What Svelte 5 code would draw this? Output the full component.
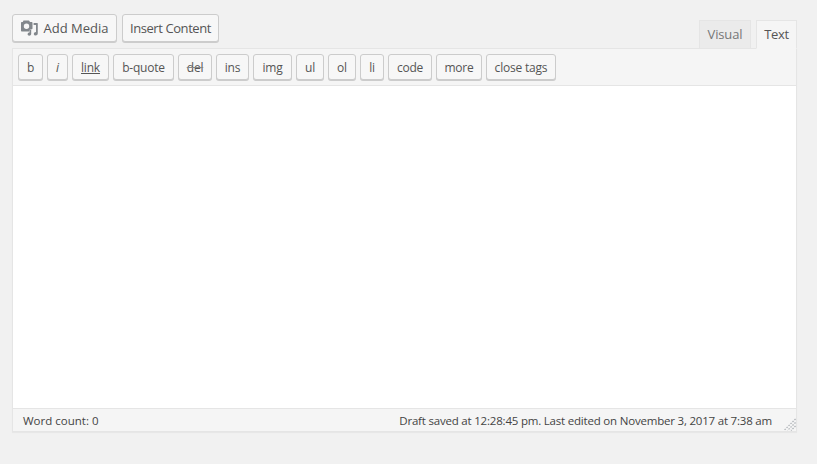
<script>
  const tags = [
    { label: 'b', w: 25 },
    { label: 'i', w: 21, cls: 'it' },
    { label: 'link', w: 37, cls: 'un' },
    { label: 'b-quote', w: 61 },
    { label: 'del', w: 34, cls: 'st' },
    { label: 'ins', w: 33 },
    { label: 'img', w: 39 },
    { label: 'ul', w: 28 },
    { label: 'ol', w: 28 },
    { label: 'li', w: 24 },
    { label: 'code', w: 44 },
    { label: 'more', w: 46 },
    { label: 'close tags', w: 70 }
  ];
</script>

<div class="page">
  <div class="head">
    <div class="actions">
      <button class="btn media">
        <svg width="18" height="18" viewBox="0 0 18 18" aria-hidden="true">
          <path fill="#82878c" fill-rule="evenodd" d="M3.5 1.5h5.5l1 1.5h1.5c.6 0 1 .4 1 1v5.2c0 .6-.4 1-1 1H10l-1 2.3H2c-.6 0-1-.4-1-1V4c0-.6.4-1 1-1h.8zM6.5 4.6a2.7 2.7 0 1 0 0 5.4 2.7 2.7 0 0 0 0-5.4z"/>
          <path fill="#82878c" d="M13.6 4h3.6c.4 0 .6.3.6.6v9.6c0 1.3-1 2.3-2.3 2.3-1 0-1.7-.6-1.7-1.5 0-1.1 1-1.9 2.2-1.9V6h-2.4zM11.2 10.5v4.2c0 1.1-.9 2-2 2-.9 0-1.6-.6-1.6-1.4 0-1 .9-1.7 1.9-1.7v-3.1z"/>
        </svg>
        <span>Add Media</span>
      </button>
      <button class="btn insert">Insert Content</button>
    </div>
    <div class="tabs">
      <div class="tab visual">Visual</div>
      <div class="tab active">Text</div>
    </div>
  </div>
  <div class="box">
    <div class="toolbar">
      {#each tags as t}
        <button class="tag {t.cls ?? ''}" style:width="{t.w}px">{t.label}</button>
      {/each}
    </div>
    <div class="editor"></div>
    <div class="status">
      <span>Word count: 0</span>
      <span class="saved">Draft saved at 12:28:45 pm. Last edited on November 3, 2017 at 7:38 am</span>
      <svg class="grip" width="13" height="13" viewBox="0 0 13 13" aria-hidden="true">
        <path d="M12.5 1 1 12.5M12.5 4.5 4.5 12.5M12.5 8 8 12.5" stroke="#a8adb2" stroke-width="1.2" stroke-dasharray="1.4 1.4" fill="none"/>
      </svg>
    </div>
  </div>
</div>

<style>
  :global(body) {
    margin: 0;
    background: #f1f1f1;
  }
  .page {
    width: 817px;
    height: 464px;
    box-sizing: border-box;
    padding: 14px 20px 0 12px;
    font-family: "Open Sans", sans-serif;
    color: #444;
    overflow: hidden;
  }
  .head {
    display: flex;
    justify-content: space-between;
    align-items: flex-end;
    height: 34px;
  }
  .actions {
    display: flex;
    gap: 5px;
    align-self: flex-start;
  }
  button {
    font-family: inherit;
    margin: 0;
    padding: 0;
    cursor: pointer;
  }
  .btn {
    box-sizing: border-box;
    height: 28px;
    border: 1px solid #ccc;
    border-radius: 3px;
    background: #f7f7f7;
    box-shadow: 0 1px 0 #ccc;
    color: #555;
    font-size: 13px;
    line-height: 26px;
    display: flex;
    align-items: center;
    justify-content: center;
  }
  .media {
    width: 105px;
    gap: 6px;
    padding-right: 1px;
  }
  .insert {
    width: 97px;
    letter-spacing: -0.42px;
  }
  .tabs {
    display: flex;
    gap: 5px;
    margin-bottom: -1px;
    position: relative;
  }
  .tab {
    box-sizing: border-box;
    height: 29px;
    font-size: 13px;
    line-height: 26px;
    text-align: center;
    border: 1px solid #e5e5e5;
  }
  .visual {
    width: 52px;
    background: #ebebeb;
    color: #777;
    letter-spacing: -0.15px;
  }
  .active {
    width: 41px;
    background: #f5f5f5;
    border-bottom-color: #f5f5f5;
    color: #555;
    letter-spacing: -0.4px;
  }
  .box {
    width: 785px;
    box-sizing: border-box;
    border: 1px solid #e5e5e5;
    box-shadow: 0 1px 1px rgba(0, 0, 0, 0.04);
    background: #f5f5f5;
  }
  .toolbar {
    display: flex;
    gap: 4px;
    height: 37px;
    box-sizing: border-box;
    padding: 5px 0 0 5px;
    border-bottom: 1px solid #e5e5e5;
  }
  .tag {
    box-sizing: border-box;
    height: 26px;
    padding-top: 1px;
    border: 1px solid #ccc;
    border-radius: 3px;
    background: #f7f7f7;
    box-shadow: 0 1px 0 #ccc;
    color: #555;
    font-size: 12px;
    line-height: 23px;
    text-align: center;
    letter-spacing: -0.2px;
  }
  .it {
    font-style: italic;
  }
  .un {
    text-decoration: underline;
  }
  .st {
    text-decoration: line-through;
    text-decoration-color: #888;
  }
  .editor {
    height: 322px;
    background: #fff;
  }
  .status {
    position: relative;
    box-sizing: border-box;
    height: 23px;
    display: flex;
    justify-content: space-between;
    padding: 0 24px 0 10px;
    border-top: 1px solid #e5e5e5;
    font-size: 11.5px;
    line-height: 24px;
    color: #444;
  }
  .saved {
    letter-spacing: -0.2px;
  }
  .grip {
    position: absolute;
    right: 0;
    bottom: 0;
  }
</style>
